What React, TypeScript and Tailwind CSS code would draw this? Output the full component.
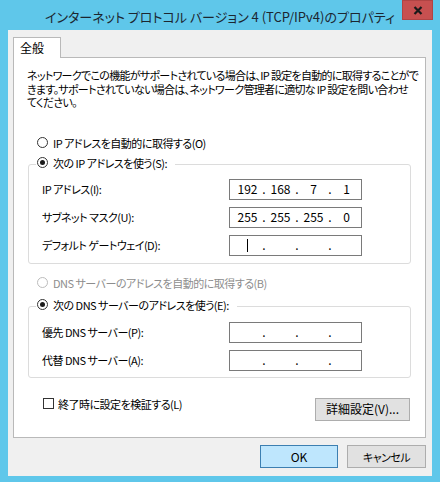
import React from "react";

const jp = "font-['Noto_Sans_CJK_JP',sans-serif] [font-feature-settings:'palt']";

interface IpFieldProps {
  parts: string[];
  caret?: boolean;
}

const IpField: React.FC<IpFieldProps> = ({ parts, caret }) => {
  return (
    <div className="w-[133px] h-[21px] border border-[#7a7a7a] bg-white flex items-center pl-[3px] text-[12px] leading-[16px] tracking-normal text-black">
      {parts.map((p, i) => (
        <React.Fragment key={i}>
          <div className="w-[29px] flex justify-center items-center">
            {caret && i === 0 ? (
              <span className="inline-block w-[1px] h-[13px] bg-black" />
            ) : (
              p
            )}
          </div>
          {i < 3 && <div className="w-[4px] text-center">.</div>}
        </React.Fragment>
      ))}
    </div>
  );
};

const Radio = ({ checked, disabled }: { checked?: boolean; disabled?: boolean }) => (
  <span
    className={`w-[11px] h-[11px] rounded-full border bg-white flex items-center justify-center shrink-0 ${
      disabled ? "border-[#bcbcbc]" : "border-[#333333]"
    }`}
  >
    {checked && <span className="w-[5px] h-[5px] rounded-full bg-[#1a1a1a]" />}
  </span>
);

const Row = ({ label, children }: { label: string; children: React.ReactNode }) => (
  <div className="flex items-center h-[21px]">
    <div className="w-[187px] leading-[16px]">{label}</div>
    {children}
  </div>
);

export default function App() {
  return (
    <div className={`w-[440px] h-[482px] bg-[#5fc7ea] flex flex-col px-[8px] pb-[6px] ${jp} text-black`}>
      {/* Title bar */}
      <div className="relative h-[30px] flex items-center justify-center pt-[3px]">
        <span className="text-[13px] leading-[18px] text-[#1c2630]">
          インターネット プロトコル バージョン 4 (TCP/IPv4)のプロパティ
        </span>
        <button className="absolute top-[0px] right-[-1px] w-[31px] h-[20px] bg-[#c75050] border border-[#b04444] flex items-center justify-center">
          <svg width="10" height="9" viewBox="0 0 10 9">
            <path d="M1.5 1 L8.5 8 M8.5 1 L1.5 8" stroke="#1a1a1a" strokeWidth="2.2" />
          </svg>
        </button>
      </div>

      {/* Client area */}
      <div className="flex-1 bg-[#f0f0f0] pl-[5px] pr-[6px] pt-[7px] flex flex-col">
        {/* Tab header */}
        <div className="relative z-10 -mb-[1px] w-[48px] h-[21px] bg-white border border-b-0 border-[#b9b9b9] pl-[6px] text-[12px] leading-[20px]">
          全般
        </div>

        {/* Tab panel */}
        <div className="h-[381px] bg-white border border-[#b9b9b9] flex flex-col text-[11px] tracking-[-0.5px]">
          <p className="mt-[11px] ml-[13px] leading-[13.5px] tracking-[-0.7px] whitespace-nowrap">
            ネットワークでこの機能がサポートされている場合は、IP 設定を自動的に取得することがで
            <br />
            きます。サポートされていない場合は、ネットワーク管理者に適切な IP 設定を問い合わせ
            <br />
            てください。
          </p>

          <label className="mt-[25px] ml-[23px] flex items-center gap-[5px] h-[16px] leading-[16px]">
            <Radio />
            IP アドレスを自動的に取得する(O)
          </label>

          <fieldset className="mt-[4px] ml-[14px] w-[383px] border border-[#dcdcdc] rounded-[3px] p-0">
            <legend className="ml-[7px] pl-[1px] pr-[8px] pb-[4px] leading-[16px]">
              <span className="flex items-center gap-[5px]">
                <Radio checked />
                次の IP アドレスを使う(S):
              </span>
            </legend>
            <div className="pl-[13px] pt-[4px] pb-[7px] flex flex-col gap-[7px]">
              <Row label="IP アドレス(I):">
                <IpField parts={["192", "168", "7", "1"]} />
              </Row>
              <Row label="サブネット マスク(U):">
                <IpField parts={["255", "255", "255", "0"]} />
              </Row>
              <Row label="デフォルト ゲートウェイ(D):">
                <IpField parts={["", "", "", ""]} caret />
              </Row>
            </div>
          </fieldset>

          <label className="mt-[11px] ml-[23px] flex items-center gap-[5px] h-[16px] leading-[16px] text-[#8d8d8d]">
            <Radio disabled />
            DNS サーバーのアドレスを自動的に取得する(B)
          </label>

          <fieldset className="mt-[6px] ml-[14px] w-[383px] border border-[#dcdcdc] rounded-[3px] p-0">
            <legend className="ml-[7px] pl-[1px] pr-[8px] pb-[4px] leading-[16px]">
              <span className="flex items-center gap-[5px]">
                <Radio checked />
                次の DNS サーバーのアドレスを使う(E):
              </span>
            </legend>
            <div className="pl-[13px] pt-[5px] pb-[6px] flex flex-col gap-[7px]">
              <Row label="優先 DNS サーバー(P):">
                <IpField parts={["", "", "", ""]} />
              </Row>
              <Row label="代替 DNS サーバー(A):">
                <IpField parts={["", "", "", ""]} />
              </Row>
            </div>
          </fieldset>

          <div className="mt-[18px] ml-[29px] mr-[15px] flex items-start justify-between">
            <label className="flex items-center gap-[4px] h-[16px] leading-[16px]">
              <span className="w-[11px] h-[11px] border border-[#333333] bg-white shrink-0" />
              終了時に設定を検証する(L)
            </label>
            <button className="mt-[2px] w-[95px] h-[23px] bg-[#e1e1e1] border border-[#adadad] text-[12px] tracking-normal leading-[16px]">
              詳細設定(V)...
            </button>
          </div>
        </div>

        {/* Dialog buttons */}
        <div className="mt-[7px] flex justify-end gap-[9px] text-[11px] tracking-[-0.5px]">
          <button className="w-[78px] h-[23px] bg-[#bee6fd] border border-[#3c7fb1] text-[12px] tracking-normal leading-[16px]">
            OK
          </button>
          <button className="w-[79px] h-[23px] bg-[#e1e1e1] border border-[#adadad] leading-[16px]">
            キャンセル
          </button>
        </div>
      </div>
    </div>
  );
}
